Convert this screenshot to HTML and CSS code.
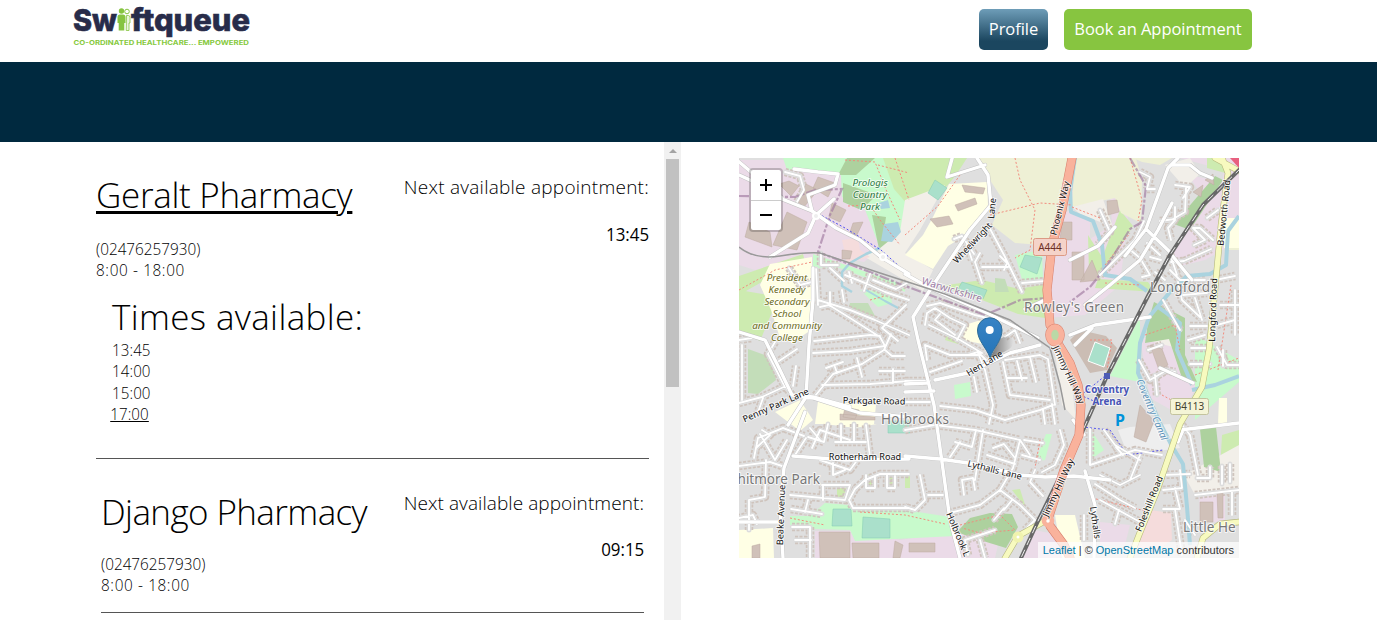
FILE: index.html
```html
<!DOCTYPE html>
<html lang="en">
<head>
<meta charset="utf-8">
<title>Swiftqueue</title>
<link rel="stylesheet" href="styles.css">
</head>
<body>
<header class="header">
  <svg class="logo" viewBox="68 0 190 54" role="img" aria-label="Swiftqueue">
    <g class="logo-word">
      <text x="73" y="30.500" textLength="44" lengthAdjust="spacingAndGlyphs">Sw</text>
      <text x="131" y="30.500" textLength="119" lengthAdjust="spacingAndGlyphs">ftqueue</text>
    </g>
    <g fill="#86c440">
      <circle cx="121.5" cy="11" r="2.7"/>
      <path d="M117.5 17q0-2.500 2.500-2.500h3q2.500 0 2.500 2.500v6h-1.200v7.500h-5.600V23h-1.200z"/>
      <circle cx="127" cy="11.500" r="2.300" fill="#fff" stroke="#86c440" stroke-width="1"/>
      <path d="M126.500 15.500h2q1.500 0 1.500 2V23h-1v7.500h-2.800z" fill="#e9f5dc" stroke="#86c440" stroke-width=".8"/>
    </g>
    <text class="logo-tag" x="73.500" y="44.500" textLength="175.500" lengthAdjust="spacingAndGlyphs">CO-ORDINATED HEALTHCARE... EMPOWERED</text>
  </svg>
  <nav class="actions">
    <a class="btn btn-profile">Profile</a>
    <a class="btn btn-book">Book an Appointment</a>
  </nav>
</header>
<div class="banner"></div>
<main class="content">
  <section class="list">
    <article class="clinic clinic-open">
      <div class="clinic-top">
        <div>
          <h2 class="name name-link">Geralt Pharmacy</h2>
          <p class="detail phone">(02476257930)</p>
          <p class="detail hours">8:00 - 18:00</p>
        </div>
        <div class="next">
          <p class="next-label">Next available appointment:</p>
          <p class="next-time">13:45</p>
        </div>
      </div>
      <div class="times">
        <h2 class="times-title">Times available:</h2>
        <ul class="slots">
          <li>13:45</li><li>14:00</li><li>15:00</li><li class="slot-active">17:00</li>
        </ul>
      </div>
    </article>
    <article class="clinic clinic-second">
      <div class="clinic-top">
        <div>
          <h2 class="name name-django">Django Pharmacy</h2>
          <p class="detail phone">(02476257930)</p>
          <p class="detail hours">8:00 - 18:00</p>
        </div>
        <div class="next">
          <p class="next-label">Next available appointment:</p>
          <p class="next-time">09:15</p>
        </div>
      </div>
    </article>
  </section>
  <div class="scrollbar"><span class="scroll-up"></span><span class="scroll-thumb"></span></div>
  <section class="map">
    <svg class="map-canvas" viewBox="739 158 500 400">
      <defs>
        <path id="minor" d="M785 172L800 176 804 190 797 202M821 253V265H838M789 268L800 285 812 282M816 269L818 305M845 275L865 283 885 292 909 300M849 272L852 283M870 274L864 291M873 280L896 289 907 283M830 268L844 281
        M818 300L850 310 875 320 909 335M814 341L870 335 880 336M813 353L850 351 885 346 880 337 850 318 829 305 820 307M776 363L797 349M775 342L768 354 784 385 792 395M793 386L796 366M826 368L843 362M835 367L837 373M857 358L862 377M879 371H905M893 369V383M885 350L892 356H905M739 403L762 397 788 385M742 345V400M739 340L752 338M757 415L763 398
        M891 334L884 350 862 364 833 374 815 396M822 385L870 384 909 381M898 341L882 328 906 305M830 292V306M842 290L844 302
        M754 458L758 438 783 428 804 436M760 434L775 460 787 440M762 430L770 435 756 448M795 455L806 438M812 448L820 430 850 440M808 437L824 442 828 424M835 442H866M841 425V442M854 424V442M866 425L870 457M820 460L850 470 861 455M833 463V475L845 470M749 530V500L765 497 766 460M739 466L770 462 782 466M790 495L845 500 850 485H822M823 486V500M791 509L822 514M808 500L805 512M792 527H810V558M795 540H811M757 524L753 515 739 518M849 500L855 489 865 480 880 474H909M849 500L853 508 875 508H909M866 475V488H875V476M887 475V488H895V476M820 440L810 428
        M927 306L940 303 975 315 1003 322M929 325L960 340 982 353M925 325L927 313 935 308 950 318 965 325 957 340M940 314L935 320 955 335M927 360L925 345 950 355 980 355M930 372L962 361M968 355L978 352 986 360M978 353L985 370 993 405 989 424M1005 360L1040 355 1048 359 1055 405M1003 362L1010 395 1050 400M1017 361L1022 380M1030 357L1036 382M1007 378H1027M1005 337L1015 330 1020 343M974 377L977 392M905 381H930M905 402H930M940 406L975 410 1005 420 1040 410 1053 405M1043 410L1045 424M1052 404L1055 424
        M905 430L935 425 975 430 1020 440 1030 455M983 430L975 480M955 442L972 447 976 430M950 457L960 442M993 448L1004 444 1015 458M1020 440L1013 468 1000 490 980 505 950 513M987 455L1015 464M1024 440L1043 443M1022 455L1040 460M1060 430L1064 445 1055 465 1042 472M1035 470L1030 482 1043 496M1000 490L1020 505 1035 520 1025 530M1012 500L1004 510M964 495L962 480 973 478 975 490M920 475L925 500 915 510 905 507M928 495H943M968 555L965 540 995 530M980 540L985 558M994 520L1004 508
        M967 245L972 260M954 239L962 236 974 254M980 253L975 262 982 283M982 267H1008M1004 270L1007 263 1000 256M988 225L1004 255 1022 292M1022 283L1045 281
        M1140 172L1150 177 1147 189M1147 189H1155M1175 185L1190 187 1183 198M1160 221L1175 219 1175 207M1175 220L1168 228 1171 240M1173 219L1185 212 1186 188M1144 221L1135 240 1120 255 1100 275M1128 248L1140 258 1150 275 1142 277M1147 243L1160 255M1150 257L1161 260M1155 272L1165 280M1171 262L1184 261 1211 249M1170 270L1180 280 1205 280M1178 282L1182 300 1200 317M1194 245L1205 240 1193 228 1200 228 1213 240M1207 218L1218 210M1170 254L1177 275M1183 295L1207 293M1195 298L1202 320M1190 326H1207M1188 340L1205 335M1190 364H1210M1191 348H1208M1220 305H1239M1217 325L1235 320M1217 347L1227 365H1239M1223 350V366M1235 290V335M1215 280L1235 276M1163 300L1180 330M1100 210L1110 232 1098 245
        M1139 360L1150 380 1167 370M1148 350L1162 345M1165 370L1175 372M1157 395L1155 375M1104 430L1115 445 1140 460M1090 465L1135 450 1162 455M1100 475L1120 485 1140 475M1116 447L1123 455M1130 480L1140 455M1095 484L1120 500 1135 508M1100 500L1140 522M1119 510L1115 524M1163 490L1182 488 1180 470M1162 475L1190 474M1163 509H1180L1175 488M1182 425L1190 435 1198 475M1197 478H1210V467M1195 495L1239 490M1222 466V484M1230 464V482M1232 515V492M1185 520L1195 535M1175 509L1182 555M1090 429L1090 465M1084 540V515"/>
        <path id="major" d="M739 332L765 340 780 370 792 395 813 397M813 268V300L809 345 806 397M813 397L850 407M788 425L806 397M796 396L813 398 860 413 909 417M739 175L750 180 782 199 812 211 836 228 860 240 881 257 909 274M782 198L738 161M816 215L808 233 770 257M812 211L808 195 835 185 838 174 818 172 794 169M816 215L834 199M905 392L934 391M927 383L905 384
        M977 158L988 175 991 205 970 230 930 290 913 317 918 340 934 405 941 455 950 520 960 558M935 380L968 373 1010 353 1040 345M905 456L940 459 975 464 1020 475 1045 477 1074 476 1110 480M905 274L930 288 985 312 1038 338M953 155L947 177 985 165M1085 471L1095 505 1094 558M805 412L784 468 780 505 783 558M793 456L845 460 909 459M739 522L780 522M1070 335L1095 325 1150 317M1045 300L1025 309M1070 260L1098 246 1115 227M1073 420L1084 435M1180 430L1239 423M1160 368L1193 383M1075 345L1092 328M1183 430L1178 442M1172 203L1158 230 1140 260 1110 285 1085 305M1172 165L1190 165 1200 173 1212 178M1146 229L1168 168 1178 158M1125 256L1146 229 1170 252M1170 253L1192 280"/>
        <path id="trunk" d="M1072 158L1062 210 1052 245 1047 290 1050 325M1059 345L1070 363 1078 385 1081 405 1079 435 1064 470 1049 516M1050 526L1064 545 1070 558"/>
        <path id="secondary" d="M1221 155L1228 173 1221 225 1215 290 1209 350 1202 387 1180 424 1157 491 1139 535 1130 558M1215 158L1239 171M1197 558L1203 538 1220 524 1239 522M1045 521L1018 536 1005 558"/>
        <path id="rail" d="M1241 168L1203 205 1170 255 1148 296 1107 376 1084 428 1038 521 1021 558"/>
      </defs>
      <rect x="739" y="158" width="500" height="400" fill="#dfdfdf"/>
      <!-- land use -->
      <g fill="#ebdbe8">
        <path d="M739 160H783L840 172 842 185 864 207 884 245 864 262 820 253 785 257 760 263 739 248z"/>
        <path d="M739 250L785 257 818 252 840 257 870 274 905 284 905 293 850 269 805 259 755 270 739 265z"/>
        <path d="M1060 215L1070 210 1090 222 1090 295 1050 300 1052 260z"/><path d="M1065 255L1112 225 1110 195 1130 198 1120 285 1085 315 1047 318z"/>
        <path d="M1188 175L1240 185V240L1205 260 1180 266 1170 255 1205 200z"/>
        <path d="M1180 158H1239V210H1218L1224 170z"/>
        <path d="M1140 338H1168L1184 365 1200 382 1180 415 1150 398z"/><path d="M815 531H852L900 540 962 530 1000 536 995 558H815z"/><path d="M1100 522L1130 525 1125 545 1100 545z"/><path d="M1199 490H1225V522H1200z"/><path d="M1034 530L1060 535 1065 558H1020z"/>
      </g>
      <path d="M1230 158H1239V168z" fill="#e8607f"/>
      <g fill="#c8facc">
        <path d="M783 158H905L909 175 909 240 880 248 864 207 842 197 841 175 787 170z"/><path d="M813 254L905 285 905 292 840 268H813z"/><path d="M810 516L825 503 905 510 950 517 955 536 855 541 850 530 790 528 790 516z"/><path d="M1140 317L1140 382 1110 376z"/><path d="M1195 335L1239 360V382L1195 420z"/><path d="M1015 255L1042 250 1043 278 1023 283z"/><path d="M954 385L970 382 971 396 955 399z"/><path d="M1046 434H1052L1045 460 1035 462z"/><path d="M1090 428L1104 450 1090 460z"/><path d="M860 290L890 292 892 303 878 307z"/>
      </g>
      <g fill="#cdebb0">
        <path d="M883 158H967L956 175 947 186 925 202 908 205 894 189z"/><path d="M739 290L780 297 775 305 760 341 739 330z"/><path d="M739 276L803 254 805 262 774 275 739 295z"/><path d="M982 280L1019 289 1045 284V318L1018 314 982 300 940 286z"/><path d="M1120 210L1133 226 1100 280 1104 253z"/><path d="M1088 235L1104 260 1102 277 1089 273z"/><path d="M1098 279L1148 282 1155 292 1095 288z"/><path d="M1207 158H1222L1229 174 1207 168z"/><path d="M1012 490L1020 489 1026 508z"/><path d="M948 330L961 336 958 344 945 340z"/><path d="M865 474H872V488H865zM887 474H895V488H887zM905 474H910V488H905zM837 488H848V500H837z"/><path d="M1222 435L1239 430V475L1220 472z"/>
      </g>
      <g fill="#eef0d5"><path d="M975 155H1073L1053 240 1040 245 1015 243 992 225 1003 200 990 180z"/><path d="M1075 155H1135L1142 180 1141 223 1121 213 1115 198 1072 207z"/><path d="M1133 158H1172L1160 165 1142 162z"/><path d="M1222 218H1239V250L1225 250z"/></g>
      <g fill="#f2efe9"><path d="M905 200L945 185 920 230 905 253 933 270 923 291 865 257 881 245 900 232z"/><path d="M1072 207L1103 199 1113 227 1080 214z"/><path d="M1165 165L1190 158 1200 174 1185 188z"/><path d="M1158 308L1181 328 1177 348 1146 340 1147 320z"/><path d="M1184 475L1239 445V490L1195 495z"/><path d="M1054 345L1070 370 1076 420 1062 405z"/></g>
      <g fill="#ffffe5">
        <path d="M770 264L812 257V306L808 332 792 343 779 335 771 310 760 285z"/><path d="M949 184L987 182 988 205 966 235 948 246 933 269 905 255 923 235 933 217z"/><path d="M965 325L987 318V345L963 340z"/><path d="M818 401L876 405 874 424H815z"/><path d="M775 412L800 400 813 420 800 431z"/><path d="M825 424H877L855 428z"/><path d="M739 530L773 528 774 558H739z"/><path d="M1055 515H1075L1085 558H1062z"/><path d="M1222 218H1239V248H1224z"/><path d="M1219 398H1227V424H1218z"/>
      </g>
      <g fill="#add19e"><path d="M843 183L877 195 861 210 843 202z"/><path d="M838 175L847 158H875L856 175z"/><path d="M872 215L886 217 884 230 896 235 879 249z"/><path d="M1174 224L1215 176 1223 180 1190 230z"/><path d="M957 532L970 518 990 513 1012 514 1018 527 1006 548 970 537z"/><path d="M1200 429L1216 427 1221 472 1204 467z"/><path d="M1154 302L1185 318V355L1197 382 1182 378 1169 339 1145 343 1148 322z"/></g>
      <g fill="#c3ddb9"><path d="M850 303H868L875 316 860 318 848 310z"/><path d="M748 349L770 357 776 380 758 394 748 393z"/><path d="M995 278L1005 279 1009 292 995 292z"/></g>
      <g fill="#aae0cb" stroke="#83cbb0" stroke-width=".5"><path d="M935 180L947 188 938 200 928 193z"/><path d="M833 509H851L852 526H832zM863 517L890 519V538H862z"/><path d="M1025 255L1042 258 1037 274 1020 267z"/><path d="M888 421H910V433H888z"/><path d="M962 282L987 290 983 299 958 289z"/></g>
      <g fill="#f5dcdc"><path d="M842 240L858 238 860 250 870 257 847 263z"/><path d="M1150 510L1171 513 1172 540 1150 555 1137 550z"/></g>
      <path d="M1130 427L1170 424 1180 448 1128 455 1118 430z" fill="#eee"/>
      <path d="M1070 340L1080 330 1106 336 1117 348 1107 370 1090 373z" fill="#cbbdb4"/>
      <path d="M1095 342L1110 348 1104 367 1088 361z" fill="#aae0cb" stroke="#fff"/>
      <!-- residential street frontage -->
      <use href="#minor" class="houses"/><use href="#minor" class="yard"/>
      <!-- large buildings -->
      <g fill="#d0c1b9" stroke="#bcaaa1" stroke-width=".5">
        <path d="M749 222L770 232 772 247 745 237zM787 212L807 222 797 250 773 245zM806 184L818 190 804 207 798 202zM818 177L835 183 828 197 813 188zM779 184L789 181 799 186 791 196zM832 203L846 210 840 222 829 217zM853 223L863 222 856 237 850 232zM842 250L852 251 850 259 842 259z"/>
        <path d="M1062 222H1072V240H1060zM1107 201L1117 200 1119 212 1108 215zM1072 252H1084V280H1072zM1092 260L1100 280 1080 282zM1193 192L1203 185 1201 197zM1205 180L1213 174 1214 185z"/>
        <path d="M1140 405L1154 421 1146 442 1134 437zM1150 345L1162 349 1168 365 1159 370z"/>
        <path d="M819 532H850V558H820zM852 543H879V558H853zM895 541L903 545 900 558H893zM909 543H935V552H909zM1200 502L1213 502V522H1200zM1217 492L1223 492V518H1218z"/>
        <path d="M955 205L975 198 977 204 958 211zM930 219L949 216 953 224 937 227zM962 185L985 188 983 194 965 192zM845 407L859 410 855 419 843 417zM840 414L875 417V420H840zM752 546L760 544V558H752z"/>
      </g>
      <!-- water -->
      <g fill="none" stroke="#aad3df" stroke-width="4" stroke-linejoin="round">
        <path d="M1075 158L1070 191 1071 212 1093 221 1102 245 1105 275 1130 279 1147 291"/><path d="M1239 216L1228 231 1226 265 1210 274 1187 276 1170 292 1149 317 1140 343 1138 373 1160 423 1172 446 1183 464 1187 507 1190 545"/><path d="M1158 307L1180 323 1177 350 1187 373 1192 385"/><path d="M1192 390L1215 385 1239 376"/><path d="M880 248L866 254 850 263 842 272 842 286 852 292" stroke-width="2.500"/><path d="M866 290L885 301 898 308" stroke-width="2"/>
      </g>
      <path d="M879 203L888 200 890 208 881 209zM884 224L898 222 901 232 892 242 881 241z" fill="#aad3df"/>
      <!-- footpaths -->
      <path class="footpath" d="M845 160L875 162 887 192 900 220M895 158L909 200M848 206L870 205 880 220 900 245M739 290L775 270 812 262M1015 158L1020 180 1035 210 1030 250 1015 258M990 215L1040 203 1072 205M905 235L938 206 960 175M1130 158L1142 200 1138 221M1072 207L1100 218M1105 265L1130 233M1105 283L1140 285M960 525L1000 515 1015 530 980 533 962 528M860 512L905 515 945 524M790 518L825 525M1145 335L1175 325 1180 350M1195 375L1239 358M1090 340L1112 340 1107 370M878 165L909 173M1092 498L1150 512M1162 395L1190 410M1040 440L1035 468M1231 285L1218 370M870 300L885 296"/>
      <path d="M815 212L845 228 881 250 909 275M1082 427L1110 430 1127 455 1163 450M1080 395L1103 405M905 275L920 283M1075 400L1105 376" class="cycleway"/>
      <path d="M739 196L795 197 815 190 842 189 830 215 818 252 870 272 905 286 985 315 1020 300 1050 298M1130 158L1146 186 1142 222 1130 229 1107 266M1107 266L1090 287 1070 302" class="boundary"/>
      <!-- roads -->
      <use href="#minor" class="case-minor"/><use href="#minor" class="road-minor"/>
      <use href="#major" class="case-major"/><use href="#major" class="road-major"/>
      <path d="M739 247Q755 260 780 256T820 253L880 273 945 294 1010 320 1050 348 1060 385 1065 410" fill="none" stroke="#999" stroke-width="1.500"/>
      <use href="#secondary" class="case-secondary"/><use href="#secondary" class="road-secondary"/>
      <use href="#rail" class="rail"/><use href="#rail" class="rail-dash"/>
      <use href="#trunk" class="case-trunk"/><use href="#trunk" class="road-trunk"/>
      <ellipse cx="1055" cy="335" rx="6.500" ry="8" fill="#b9d9a6" stroke="#d77e6b" stroke-width="6.500"/><ellipse cx="1055" cy="335" rx="6.500" ry="8" fill="#b9d9a6" stroke="#f9b29c" stroke-width="5.500"/>
      <circle cx="1048" cy="521" r="4" fill="#fff" stroke="#f9b29c" stroke-width="4.500"/><circle cx="1018" cy="537" r="3.500" fill="#fff" stroke="#f0f3ae" stroke-width="4"/>
      <circle cx="816" cy="216" r="3" fill="#eee" stroke="#fff" stroke-width="2"/><circle cx="883" cy="257" r="3" fill="#eee" stroke="#fff" stroke-width="2"/>
      <path d="M1104 373h6v6h-6z" fill="#4c5bb5"/>
      <!-- labels -->
      <g class="label park"><text x="870" y="186">Prologis</text><text x="870" y="198">Country</text><text x="870" y="210">Park</text></g>
      <g class="label school"><text x="787" y="281">President</text><text x="787" y="293">Kennedy</text><text x="787" y="305">Secondary</text><text x="787" y="317">School</text><text x="787" y="329">and Community</text><text x="787" y="341">College</text></g>
      <g class="label place"><text x="1074" y="312" textLength="100">Rowley's Green</text><text x="1180" y="292" textLength="60">Longford</text><text x="915" y="424" textLength="68">Holbrooks</text><text class="from-end" x="820" y="484">hitmore Park</text><text class="from-start" x="1183" y="532">Little He</text></g>
      <text class="label county" transform="translate(951 293) rotate(17)">Warwickshire</text>
      <g class="label street">
        <text class="from-start" transform="translate(957 264) rotate(-47)" textLength="52">Wheelwright</text><text class="from-start" transform="translate(994 219) rotate(-84)">Lane</text>
        <text transform="translate(1063 209) rotate(-76)">Phoenix Way</text><text transform="translate(1227 213) rotate(-84)">Bedworth Road</text><text transform="translate(1216 310) rotate(-88)">Longford Road</text>
        <text transform="translate(986 366) rotate(-31)">Hen Lane</text><text transform="translate(777 408) rotate(-24)">Penny Park Lane</text><text transform="translate(874 404) rotate(1)">Parkgate Road</text><text x="865" y="460">Rotherham Road</text>
        <text transform="translate(784 515) rotate(-88)">Beake Avenue</text><text transform="translate(994 473) rotate(14)">Lythalls Lane</text><text transform="translate(1066 376) rotate(65)">Jimmy Hill Way</text><text transform="translate(1061 489) rotate(-65)">Jimmy Hill Way</text><text class="from-start" transform="translate(946 514) rotate(67)">Holbrook L</text><text class="from-start" transform="translate(1090 507) rotate(82)">Lythalls</text><text transform="translate(1152 505) rotate(-68)">Foleshill Road</text>
      </g>
      <text class="label canal" transform="translate(1149 411) rotate(67)">Coventry Canal</text>
      <g class="label station"><text x="1107" y="393">Coventry</text><text x="1107" y="405">Arena</text></g>
      <text class="label parking" x="1120" y="426">P</text>
      <rect x="1033.500" y="238.500" width="33" height="17" rx="2" fill="#f5d3c9" stroke="#dc9a85"/><text class="label shield trunk-text" x="1050" y="250.500">A444</text>
      <rect x="1170.500" y="398.500" width="38" height="16" rx="2" fill="#f4f4d6" stroke="#c3c39e"/><text class="label shield" x="1189.500" y="410">B4113</text>
      <!-- marker -->
      <defs><linearGradient id="pin" x2="0" y2="1"><stop stop-color="#3883c5"/><stop offset="1" stop-color="#2575b8"/></linearGradient><linearGradient id="shade"><stop stop-color="#000" stop-opacity=".5"/><stop offset="1" stop-color="#000" stop-opacity="0"/></linearGradient></defs>
      <path d="M990 358L1000 339Q1009 333 1013 340 1015 347 1004 352z" fill="url(#shade)"/>
      <path d="M990 357.500C986 347 977.500 340.500 977.500 330a12.200 12.200 0 0 1 24.500 0C1002 340.500 994 347 990 357.500z" fill="url(#pin)" stroke="#2e6c97"/>
      <circle cx="989.700" cy="330" r="4" fill="#fff"/>
    </svg>
    <div class="zoom-control"><span class="zoom-button"><svg viewBox="0 0 12 12"><path d="M6 0v12M0 6h12"/></svg></span><span class="zoom-button"><svg viewBox="0 0 12 12"><path d="M0 6h12"/></svg></span></div>
    <div class="attribution"><a>Leaflet</a> | © <a>OpenStreetMap</a> contributors</div>
  </section>
</main>
</body>
</html>
```
FILE: styles.css
```css
* { box-sizing: border-box; }
body { margin: 0; background: #fff; color: #000; font-family: "Open Sans", "Noto Sans", sans-serif; font-weight: 300; overflow: hidden; }
h2, p, ul { margin: 0; padding: 0; font-weight: inherit; list-style: none; white-space: nowrap; }
.header { height: 62px; padding: 0 125px 0 68px; display: flex; justify-content: space-between; }
.logo { width: 190px; height: 54px; overflow: visible; }
.logo-word { font: 800 30.500px Inter, sans-serif; fill: #282c4a; stroke: #282c4a; stroke-width: .6px; }
.logo-tag { font: 700 6.600px Inter, sans-serif; fill: #86c93d; }
.actions { display: flex; gap: 16px; padding-top: 9px; }
.btn { height: 41px; border-radius: 5px; color: #fff; font-size: 16.500px; line-height: 40px; text-align: center; font-weight: 400; white-space: nowrap; letter-spacing: -.05px; }
.btn-profile { width: 69px; background: linear-gradient(#6e9db8, #1b465f 78%); }
.btn-book { width: 188px; background: #87c540; }
.banner { height: 80px; background: #00293f; }
.content { display: flex; height: 478px; overflow: hidden; }
.list { width: 664px; padding: 0 15px 0 96px; flex: none; }
.clinic { border-bottom: 1px solid #555; }
.clinic-open { height: 317px; padding-top: 31px; }
.clinic-second { height: 154px; margin: 0 5px; padding-top: 30px; }
.clinic-top { display: flex; justify-content: space-between; }
.name { font-size: 35px; line-height: 46px; letter-spacing: -.3px; }
.clinic-open .name { margin-top: -1px; }
.name-django { letter-spacing: -.6px; }
.name-link { text-decoration: underline; text-decoration-thickness: 3px; text-underline-offset: 3px; }
.detail { font-size: 17px; line-height: 21px; transform: scaleX(.9); transform-origin: left; }
.hours { letter-spacing: .7px; }
.phone { margin-top: 18px; }
.clinic-open .phone { margin-top: 20px; }
.next { text-align: right; }
.next-label { font-size: 19px; line-height: 28px; letter-spacing: .25px; }
.clinic-second .next-label { letter-spacing: .07px; }
.next-time { font-size: 19px; line-height: 28px; margin-top: 19px; font-weight: 400; transform: scaleX(.89); transform-origin: right; }
.clinic-second .next-time { margin-top: 18px; }
.times { padding: 14px 0 0 16px; }
.times-title { font-size: 35px; line-height: 46px; letter-spacing: .35px; }
.slots { font-size: 17px; line-height: 21.300px; letter-spacing: .1px; margin-top: -1px; transform: scaleX(.89); transform-origin: left; }
.slot-active { text-decoration: underline; margin-left: -2px; }
.scrollbar { width: 17px; height: 478px; background: #f1f1f1; display: flex; flex-direction: column; align-items: center; flex: none; }
.scroll-up { border: 4px solid transparent; border-top: 0; border-bottom-color: #a3a3a3; margin: 7px 0 6px; }
.scroll-thumb { width: 13px; height: 228px; background: #c1c1c1; }
.map { width: 500px; height: 400px; margin: 16px 0 0 58px; position: relative; overflow: hidden; flex: none; }
.map-canvas { width: 500px; height: 400px; display: block; }
.map-canvas use { fill: none; stroke-linejoin: round; stroke-linecap: round; }
.map-canvas .houses { stroke: #cfc4bd; stroke-width: 8.500; stroke-dasharray: 3 1.500; stroke-linecap: butt; }
.yard { stroke: #dfdfdf; stroke-width: 5; }
.case-minor { stroke: #cfcfcf; stroke-width: 2.600; }
.road-minor { stroke: #fff; stroke-width: 1.900; }
.case-major { stroke: #c0c0c0; stroke-width: 4.200; }
.road-major { stroke: #fff; stroke-width: 3.400; }
.case-secondary { stroke: #b5b77c; stroke-width: 6.300; }
.road-secondary { stroke: #f7fabf; stroke-width: 5.200; }
.case-trunk { stroke: #d77e6b; stroke-width: 9; }
.road-trunk { stroke: #f9b29c; stroke-width: 8; }
.rail { stroke: #686868; stroke-width: 4; }
.rail-dash { stroke: #eee; stroke-width: 1; stroke-dasharray: 7 6; }
.footpath { fill: none; stroke: #f28b7d; stroke-width: 1; stroke-dasharray: 2 2; }
.cycleway { fill: none; stroke: #5050f0; stroke-width: 1; stroke-dasharray: 2 2; }
.boundary { fill: none; stroke: #a07aa0; stroke-opacity: .65; stroke-width: 2.200; stroke-dasharray: 10 2 3 2; }
.label { text-anchor: middle; font-family: "Noto Sans", sans-serif; font-weight: 400; font-size: 9.800px; paint-order: stroke; stroke: rgba(255,255,255,.7); stroke-width: 2px; stroke-linejoin: round; }
.from-start { text-anchor: start; }
.from-end { text-anchor: end; }
.park { fill: #2c7a42; font-style: italic; }
.school { fill: #6b6a20; font-style: italic; }
.place { fill: #777; font-size: 13.500px; }
.county { fill: #9b7aa5; font-size: 10px; }
.street { fill: #111; font-size: 9.100px; }
.canal { fill: #5c91b8; font-style: italic; font-size: 9.800px; }
.station { fill: #4653b5; font-weight: 700; }
.parking { fill: #0092da; font-weight: 700; font-size: 16px; stroke: none; }
.shield { fill: #444430; stroke: none; font-size: 10px; }
.trunk-text { fill: #6d3026; }
.zoom-control { position: absolute; left: 10px; top: 10px; width: 34px; height: 64px; border: 2px solid rgba(0,0,0,.2); border-radius: 4px; background: #fff; background-clip: padding-box; }
.zoom-button { display: flex; height: 30px; align-items: center; justify-content: center; }
.zoom-button + .zoom-button { border-top: 1px solid #ccc; height: 29px; }
.zoom-button svg { width: 12px; height: 12px; stroke: #000; stroke-width: 2; }
.attribution { position: absolute; right: 0; bottom: 0; height: 16px; padding: 0 5px; background: rgba(255,255,255,.7); font: 11px/16px "Liberation Sans", Arial, sans-serif; color: #333; white-space: nowrap; }
.attribution a { color: #0078a8; }
```
